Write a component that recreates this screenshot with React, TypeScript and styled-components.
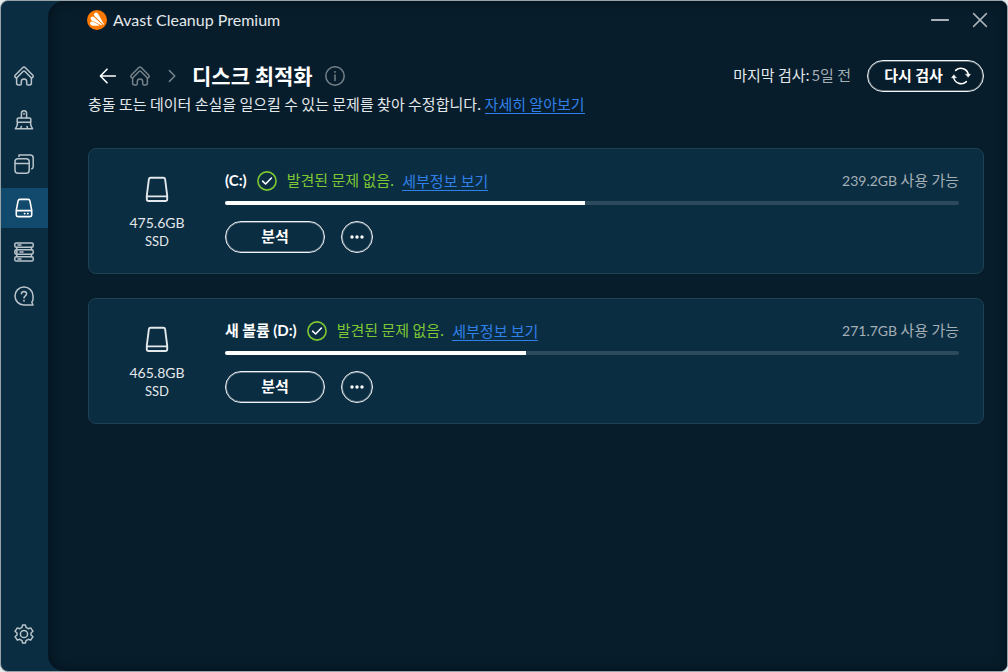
import React from "react";
import styled, { createGlobalStyle, css } from "styled-components";

const colors = {
  main: "#071d2b",
  panel: "#0b2d42",
  active: "#124a6e",
  cardLine: "#1f4154",
  text: "#ffffff",
  soft: "#e3e8eb",
  muted: "#a4afb6",
  faint: "#75828a",
  link: "#2f80e8",
  green: "#7dc832",
  track: "#2c4a5c",
};

const korean = `"Noto Sans CJK KR", sans-serif`;
const latin = `Lato, "Noto Sans CJK KR", sans-serif`;

const GlobalStyle = createGlobalStyle`
  * { box-sizing: border-box; }
  body {
    margin: 0;
    background: #e6e9ea;
    color: ${colors.text};
    font-family: ${korean};
    font-size: 15px;
    line-height: 24px;
  }
  button { font: inherit; color: inherit; cursor: pointer; }
  svg { display: block; flex: none; }
`;

const Window = styled.div`
  display: flex;
  min-height: 100vh;
  border: 1px solid #97a1a6;
  border-radius: 8px;
  background: ${colors.panel};
  overflow: hidden;
`;

const Sidebar = styled.nav`
  display: flex;
  flex-direction: column;
  justify-content: space-between;
  flex: none;
  width: 47px;
  padding: 55px 0 17px;
`;

const NavGroup = styled.div`
  display: flex;
  flex-direction: column;
  gap: 4px;
`;

const NavButton = styled.button<{ $active?: boolean }>`
  display: flex;
  align-items: center;
  justify-content: center;
  height: 40px;
  padding: 0 1px 0 0;
  border: 0;
  background: ${(p) => (p.$active ? colors.active : "transparent")};
  color: ${(p) => (p.$active ? "#ffffff" : "#b9c4cb")};
`;

const Main = styled.div`
  flex: 1;
  min-width: 0;
  border-radius: 16px 0 0 16px;
  background: ${colors.main};
  box-shadow: inset 0 0 12px 1px rgba(0, 8, 16, 0.5);
`;

const TitleBar = styled.header`
  display: flex;
  align-items: center;
  justify-content: space-between;
  height: 38px;
  padding: 0 15px 0 39px;
`;

const Brand = styled.div`
  display: flex;
  align-items: center;
  gap: 6px;
  font-family: ${latin};
  font-size: 16px;
  color: ${colors.soft};
`;

const WindowControls = styled.div`
  display: flex;
  gap: 16px;
`;

const IconButton = styled.button`
  display: flex;
  align-items: center;
  justify-content: center;
  width: 24px;
  height: 24px;
  padding: 0;
  border: 0;
  background: transparent;
  color: #a9b3b9;
`;

const Content = styled.main`
  padding: 21px 23px 24px 40px;
`;

const PageHeader = styled.div`
  display: flex;
  align-items: center;
  justify-content: space-between;
  height: 32px;
`;

const Crumbs = styled.div`
  display: flex;
  align-items: center;
  gap: 8px;
  padding-left: 8px;
`;

const CrumbButton = styled(IconButton)<{ $bright?: boolean }>`
  color: ${(p) => (p.$bright ? "#ffffff" : colors.faint)};
`;

const Title = styled.h1`
  margin: 0;
  padding: 0 2px 3px 0;
  font-size: 21px;
  line-height: 28px;
  font-weight: 700;
`;

const ScanArea = styled.div`
  display: flex;
  align-items: center;
  gap: 16px;
`;

const LastScan = styled.p`
  margin: 0;
  padding-bottom: 2px;
  color: ${colors.soft};
`;

const ScanAge = styled.span`
  margin-left: 2px;
  color: ${colors.muted};
`;

const pill = css`
  display: flex;
  align-items: center;
  justify-content: center;
  height: 32px;
  padding: 0;
  border: 1px solid #f2f5f6;
  border-radius: 16px;
  background: transparent;
  box-shadow: inset 0 0 0 1px rgba(255, 255, 255, 0.35);
  font-weight: 700;
`;

const ButtonText = styled.span`
  padding-bottom: 2px;
`;

const RescanButton = styled.button`
  ${pill}
  gap: 8px;
  width: 117px;
  padding-left: 4px;
`;

const AnalyzeButton = styled.button`
  ${pill}
  width: 100px;
`;

const MoreButton = styled.button`
  ${pill}
  width: 32px;
`;

const Intro = styled.p`
  margin: 0;
  height: 24px;
  color: ${colors.soft};
`;

const TextLink = styled.a`
  display: inline-block;
  border-bottom: 1px solid ${colors.link};
  line-height: 19px;
  color: ${colors.link};
  text-decoration: none;
`;

const DiskList = styled.div`
  display: flex;
  flex-direction: column;
  gap: 24px;
  margin-top: 32px;
`;

const DiskCard = styled.section`
  display: flex;
  border: 1px solid ${colors.cardLine};
  border-radius: 8px;
  background: ${colors.panel};
`;

const DiskInfo = styled.div`
  display: flex;
  flex-direction: column;
  align-items: center;
  flex: none;
  width: 136px;
  padding-top: 26px;
  font-family: ${latin};
  font-size: 14px;
  line-height: 18px;
  color: ${colors.soft};
`;

const DiskType = styled.span`
  font-size: 13px;
`;

const DiskSize = styled.span`
  margin-top: 11px;
`;

const DiskBody = styled.div`
  flex: 1;
  min-width: 0;
  padding: 20px 24px 20px 0;
`;

const StatusRow = styled.div`
  display: flex;
  align-items: center;
  height: 24px;
`;

const DiskName = styled.h2`
  margin: 0;
  padding-bottom: 2px;
  font-size: 15px;
  line-height: 22px;
  font-weight: 700;
`;

const Letter = styled.span`
  font-family: ${latin};
  font-size: 15px;
`;

const Status = styled.span`
  display: flex;
  align-items: center;
  gap: 10px;
  margin: 0 8px 0 10px;
  color: ${colors.green};
`;

const StatusText = styled.span`
  padding-bottom: 2px;
`;

const FreeSpace = styled.span`
  margin-left: auto;
  padding-bottom: 2px;
  color: ${colors.muted};
`;

const Amount = styled.span`
  font-family: ${latin};
  font-size: 14px;
`;

const Track = styled.div`
  height: 4px;
  margin: 8px 0 16px;
  border-radius: 2px;
  background: ${colors.track};
  overflow: hidden;
`;

const Fill = styled.div`
  height: 100%;
  background: #ffffff;
`;

const Actions = styled.div`
  display: flex;
  gap: 16px;
`;

type IconProps = { children: React.ReactNode; size?: number; stroke?: number };

function Icon({ children, size = 20, stroke = 1.5 }: IconProps) {
  return (
    <svg
      width={size}
      height={size}
      viewBox={`0 0 ${size} ${size}`}
      fill="none"
      stroke="currentColor"
      strokeWidth={stroke}
      strokeLinecap="round"
      strokeLinejoin="round"
      aria-hidden="true"
    >
      {children}
    </svg>
  );
}

const HomeIcon = () => (
  <Icon>
    <path d="M2.6 12 V17 Q2.6 19 4.6 19 H6 Q7.3 19 7.3 17.7 V15.6 A2.7 2.7 0 0 1 12.7 15.6 V17.7 Q12.7 19 14 19 H15.4 Q17.4 19 17.4 17 V12" />
    <path d="M2.6 12 Q1.2 12 .9 10.8 Q.6 9.8 1.4 9 L8.6 1.7 Q10 .4 11.4 1.7 L18.6 9 Q19.4 9.8 19.1 10.8 Q18.8 12 17.4 12 L10.7 5.3 Q10 4.7 9.3 5.3 Z" />
  </Icon>
);

const BrushIcon = () => (
  <Icon>
    <path d="M7.4 8 V3.4 a2.6 2.6 0 0 1 5.2 0 V8 M10 3.6 V4.2" />
    <path d="M4.4 8 H15.6 Q16.8 8 16.8 9.2 V12.2 H3.2 V9.2 Q3.2 8 4.4 8 Z" />
    <path d="M3.6 12.4 Q3.4 16.4 1.4 18.8 H18.6 Q16.6 16.4 16.4 12.4 M6.4 18.6 Q7.2 17.6 7.4 16.4 M13.8 18.6 Q13.2 17.6 13 16.4" />
  </Icon>
);

const WindowsIcon = () => (
  <Icon>
    <rect x="1" y="4.8" width="14.2" height="14.4" rx="3" />
    <path d="M1 9.4 H15.2 M5 2.4 V1 H16.2 Q19.2 1 19.2 4 V12.6 Q19.2 14.4 17.8 14.8" />
  </Icon>
);

const DriveIcon = () => (
  <Icon stroke={1.6}>
    <path d="M5.8 1.4 H14.2 Q15.6 1.4 15.9 2.8 L17.7 12.2 V17 Q17.7 18.6 16.1 18.6 H3.9 Q2.3 18.6 2.3 17 V12.2 L4.1 2.8 Q4.4 1.4 5.8 1.4 Z M2.5 12.6 H17.5" />
    <path d="M10.6 15.6 H10.7 M13.8 15.6 H13.9" strokeWidth="1.8" />
  </Icon>
);

const StackIcon = () => (
  <Icon>
    <rect x=".8" y=".9" width="18.4" height="4.4" rx="1.4" />
    <rect x="2.8" y="7.8" width="16.4" height="4.4" rx="1.4" />
    <rect x=".8" y="14.7" width="18.4" height="4.4" rx="1.4" />
    <path d="M4 3.1 H7 M6 10 H9 M4 16.9 H7 M2.8 5.3 V7.6 Q.8 7.8 .8 10 Q.8 12.2 2.8 12.4 V14.7 M17.4 5.3 V7.8 M17.4 12.2 V14.7" />
  </Icon>
);

const HelpIcon = () => (
  <Icon>
    <path d="M19 19 H10 A9 9 0 1 1 19 10 V13.4 Q18.8 15 17.8 16.2 Z" />
    <path d="M7.4 7.8 Q7.6 5.4 10 5.4 Q12.6 5.5 12.6 7.8 Q12.6 9 11.3 9.9 Q10 10.8 10 12" />
    <path d="M10 14.7 V14.8" strokeWidth="1.8" />
  </Icon>
);

const GearIcon = () => (
  <Icon>
    <path d="M8.6 .9 H11.4 L12 3.4 L14.3 4.7 L16.7 3.9 L19 7.3 L17 9 V11 L19 12.7 L16.7 16.1 L14.3 15.3 L12 16.6 L11.4 19.1 H8.6 L8 16.6 L5.7 15.3 L3.3 16.1 L1 12.7 L3 11 V9 L1 7.3 L3.3 3.9 L5.7 4.7 L8 3.4 Z" />
    <circle cx="10" cy="10" r="3.6" />
  </Icon>
);

const BackIcon = () => (
  <Icon stroke={1.6}>
    <path d="M17.4 10 H2.8 M9 3.2 L2.4 10 L9 16.8" />
  </Icon>
);

const ChevronIcon = () => (
  <Icon>
    <path d="M7.4 4.6 L12.8 10 L7.4 15.4" />
  </Icon>
);

const InfoIcon = () => (
  <Icon>
    <circle cx="10" cy="10" r="9.2" />
    <path d="M10 9 V14.4" />
    <path d="M10 5.8 V5.9" strokeWidth="1.8" />
  </Icon>
);

const RefreshIcon = () => (
  <Icon>
    <path d="M4.6 4.4 A7.6 7.6 0 0 1 17.4 9 M15.4 15.6 A7.6 7.6 0 0 1 2.6 11" />
    <path
      d="M14.9 8.2 H19.4 L17.3 11 Z M5.1 11.8 H.6 L2.7 9 Z"
      fill="currentColor"
      strokeWidth=".6"
    />
  </Icon>
);

const CheckIcon = () => (
  <Icon stroke={1.6}>
    <circle cx="10" cy="10" r="9.1" />
    <path d="M5.6 10.2 L8.6 13 L14.4 7" stroke="#ffffff" />
  </Icon>
);

const DotsIcon = () => (
  <svg width="14" height="4" viewBox="0 0 14 4" fill="currentColor" aria-hidden="true">
    <circle cx="2" cy="2" r="1.7" />
    <circle cx="7" cy="2" r="1.7" />
    <circle cx="12" cy="2" r="1.7" />
  </svg>
);

const DiskIcon = () => (
  <Icon size={28} stroke={1.9}>
    <path d="M7.6 2.8 H20.4 Q21.9 2.8 22.1 4.2 L24.2 20.6 V24.2 Q24.2 26 22.4 26 H5.6 Q3.8 26 3.8 24.2 V20.6 L5.9 4.2 Q6.1 2.8 7.6 2.8 Z M4 21.4 H24" />
  </Icon>
);

const LogoIcon = () => (
  <svg width="20" height="20" viewBox="0 0 20 20" aria-hidden="true">
    <circle cx="10" cy="10" r="10" fill="#ff7800" />
    <g fill="#ffffff">
      <path d="M7.6 2.9 Q9.6 1.6 11 3.7 L17 14.2 Q17.1 15 16.3 14.5 L7.5 6 Q6.2 4.2 7.6 2.9 Z" />
      <path d="M4.2 7.2 Q5.6 5.9 7.2 7.3 L15 14.6 Q15.2 15.4 14.3 15.2 L4.3 10.2 Q2.9 8.8 4.2 7.2 Z" />
      <path d="M3.4 12 Q4.3 11 5.8 11.6 L12.2 14.9 Q12.5 15.6 11.6 15.7 H5.2 Q3.6 15.4 3.2 13.6 Q3.1 12.6 3.4 12 Z" />
    </g>
  </svg>
);

const MinimizeIcon = () => (
  <Icon stroke={1.8}>
    <path d="M1.8 10 H18.2" />
  </Icon>
);

const CloseIcon = () => (
  <Icon>
    <path d="M3.6 3.6 L16.4 16.4 M16.4 3.6 L3.6 16.4" />
  </Icon>
);

const navItems = [
  { label: "홈", icon: <HomeIcon /> },
  { label: "정리", icon: <BrushIcon /> },
  { label: "프로그램", icon: <WindowsIcon /> },
  { label: "디스크", icon: <DriveIcon />, active: true },
  { label: "레지스트리", icon: <StackIcon /> },
  { label: "도움말", icon: <HelpIcon /> },
];

const disks = [
  { name: "", letter: "(C:)", size: "475.6GB", type: "SSD", free: "239.2GB", used: 49 },
  { name: "새 볼륨 ", letter: "(D:)", size: "465.8GB", type: "SSD", free: "271.7GB", used: 41 },
];

type Disk = (typeof disks)[number];

function DiskPanel({ disk }: { disk: Disk }) {
  return (
    <DiskCard>
      <DiskInfo>
        <DiskIcon />
        <DiskSize>{disk.size}</DiskSize>
        <DiskType>{disk.type}</DiskType>
      </DiskInfo>
      <DiskBody>
        <StatusRow>
          <DiskName>
            {disk.name}
            <Letter>{disk.letter}</Letter>
          </DiskName>
          <Status>
            <CheckIcon />
            <StatusText>발견된 문제 없음.</StatusText>
          </Status>
          <TextLink href="#details">세부정보 보기</TextLink>
          <FreeSpace>
            <Amount>{disk.free}</Amount> 사용 가능
          </FreeSpace>
        </StatusRow>
        <Track
          role="progressbar"
          aria-label={disk.letter}
          aria-valuenow={disk.used}
          aria-valuemin={0}
          aria-valuemax={100}
        >
          <Fill style={{ width: `${disk.used}%` }} />
        </Track>
        <Actions>
          <AnalyzeButton>
            <ButtonText>분석</ButtonText>
          </AnalyzeButton>
          <MoreButton aria-label="더 보기">
            <DotsIcon />
          </MoreButton>
        </Actions>
      </DiskBody>
    </DiskCard>
  );
}

export default function App() {
  return (
    <>
      <GlobalStyle />
      <Window>
        <Sidebar>
          <NavGroup>
            {navItems.map((item) => (
              <NavButton key={item.label} $active={item.active} aria-label={item.label}>
                {item.icon}
              </NavButton>
            ))}
          </NavGroup>
          <NavButton aria-label="설정">
            <GearIcon />
          </NavButton>
        </Sidebar>
        <Main>
          <TitleBar>
            <Brand>
              <LogoIcon />
              Avast Cleanup Premium
            </Brand>
            <WindowControls>
              <IconButton aria-label="최소화">
                <MinimizeIcon />
              </IconButton>
              <IconButton aria-label="닫기">
                <CloseIcon />
              </IconButton>
            </WindowControls>
          </TitleBar>
          <Content>
            <PageHeader>
              <Crumbs>
                <CrumbButton $bright aria-label="뒤로">
                  <BackIcon />
                </CrumbButton>
                <CrumbButton aria-label="홈">
                  <HomeIcon />
                </CrumbButton>
                <CrumbButton as="span">
                  <ChevronIcon />
                </CrumbButton>
                <Title>디스크 최적화</Title>
                <CrumbButton aria-label="정보">
                  <InfoIcon />
                </CrumbButton>
              </Crumbs>
              <ScanArea>
                <LastScan>
                  마지막 검사:<ScanAge>5일 전</ScanAge>
                </LastScan>
                <RescanButton>
                  <ButtonText>다시 검사</ButtonText>
                  <RefreshIcon />
                </RescanButton>
              </ScanArea>
            </PageHeader>
            <Intro>
              충돌 또는 데이터 손실을 일으킬 수 있는 문제를 찾아 수정합니다.{" "}
              <TextLink href="#learn-more">자세히 알아보기</TextLink>
            </Intro>
            <DiskList>
              {disks.map((disk) => (
                <DiskPanel key={disk.letter} disk={disk} />
              ))}
            </DiskList>
          </Content>
        </Main>
      </Window>
    </>
  );
}
